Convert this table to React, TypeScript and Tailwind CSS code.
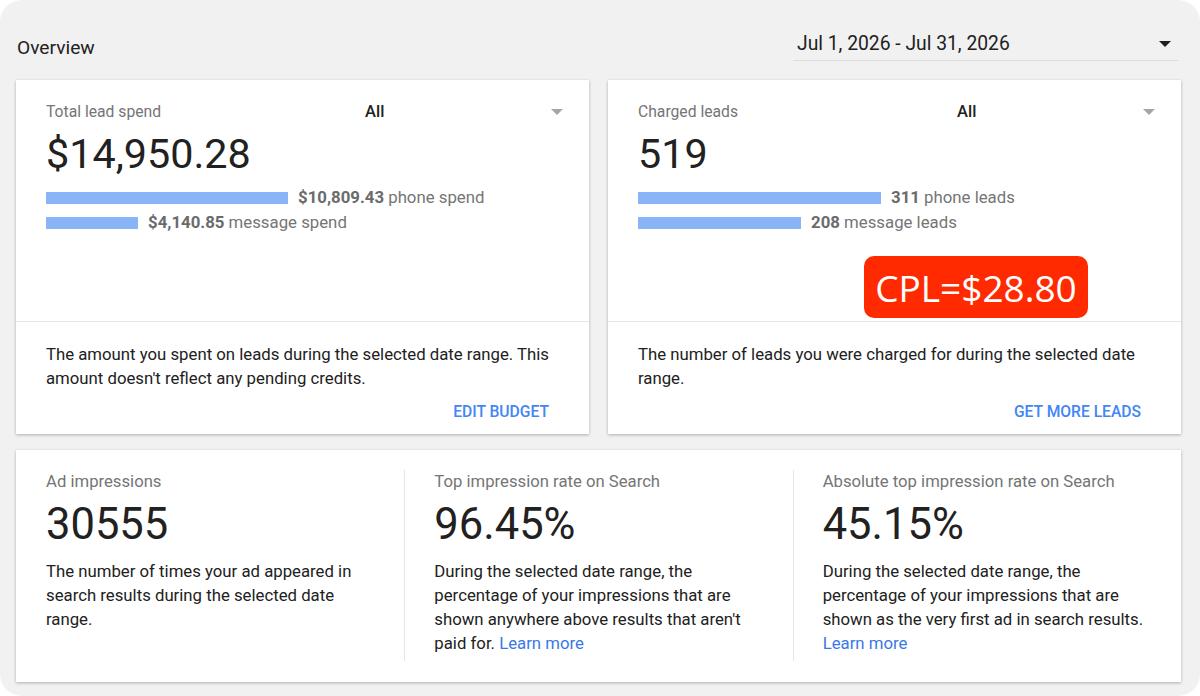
import React from "react";

type Bar = { width: number; value: string; label: string };

type LeadCardProps = {
  title: string;
  total: string;
  bars: Bar[];
  description: string;
  action: string;
  badge?: string;
};

function Caret({ color }: { color: string }) {
  return (
    <svg width="12" height="6" viewBox="0 0 12 6" className="block">
      <path d="M0 0 L12 0 L6 6 Z" fill={color} />
    </svg>
  );
}

function LeadCard({ title, total, bars, description, action, badge }: LeadCardProps) {
  return (
    <div className="bg-white shadow-[0_1px_3px_rgba(0,0,0,0.28)] flex flex-col h-[354px]">
      <div className="relative h-[241px] pl-[30px] pr-[26px] pt-5">
        <div className="flex items-center justify-between h-6">
          <span className="text-[15.7px] text-[#757575]">{title}</span>
          <div className="w-[198px] flex items-center justify-between">
            <span className="text-[16.5px] font-medium text-[#212121]">All</span>
            <Caret color="#a6a6a6" />
          </div>
        </div>
        <div className="mt-[6px] text-[41.3px] leading-[48px] text-[#212121]">{total}</div>
        <div className="mt-2 flex flex-col gap-px">
          {bars.map((b) => (
            <div key={b.label} className="flex items-center h-6 gap-[10px]">
              {/* bar width comes from the data */}
              <div className="h-3 bg-[#8ab4f8]" style={{ width: b.width }} />
              <span className="text-[16.8px] text-[#757575]">
                <span className="font-bold text-[#6b6b6b]">{b.value}</span> {b.label}
              </span>
            </div>
          ))}
        </div>
        {badge && (
          <div className="absolute left-[256px] top-[176px] w-[224px] h-[62px] rounded-[10px] bg-[#ff2a00] flex items-center justify-center">
            <span className="text-white text-[37px] font-['Open_Sans',sans-serif] leading-none">{badge}</span>
          </div>
        )}
      </div>
      <div className="border-t border-[#e6e6e6] flex-1 pl-[30px] pr-10 pt-5">
        <p className="text-[16.75px] leading-6 text-[#212121]">{description}</p>
        <div className="mt-3 flex justify-end">
          <span className="text-[15.65px] leading-5 font-medium text-[#4285f4]">{action}</span>
        </div>
      </div>
    </div>
  );
}

type Stat = { title: string; value: string; text: string; link?: boolean };

const stats: Stat[] = [
  {
    title: "Ad impressions",
    value: "30555",
    text: "The number of times your ad appeared in search results during the selected date range.",
  },
  {
    title: "Top impression rate on Search",
    value: "96.45%",
    text: "During the selected date range, the percentage of your impressions that are shown anywhere above results that aren't paid for.",
    link: true,
  },
  {
    title: "Absolute top impression rate on Search",
    value: "45.15%",
    text: "During the selected date range, the percentage of your impressions that are shown as the very first ad in search results.",
    link: true,
  },
];

export default function App() {
  return (
    <div className="w-[1200px] h-[696px] bg-white font-['Roboto',sans-serif]">
      <div className="h-full rounded-[22px] bg-[#f1f1f1] pl-4 pr-[19px]">
        <div className="h-[80px] flex items-start justify-between">
          <div className="mt-[37px] pl-px text-[19.2px] leading-[22px] text-[#212121]">Overview</div>
          <div className="mt-8 mr-[3px] w-[385px] h-[29px] border-b border-[#dcdcdc] flex items-start justify-between pl-1 pr-[7px]">
            <span className="text-[19.3px] leading-6 text-[#212121]">Jul 1, 2026 - Jul 31, 2026</span>
            <div className="h-6 flex items-center">
              <Caret color="#1f1f1f" />
            </div>
          </div>
        </div>

        <div className="grid grid-cols-2 gap-[19px]">
          <LeadCard
            title="Total lead spend"
            total="$14,950.28"
            bars={[
              { width: 242, value: "$10,809.43", label: "phone spend" },
              { width: 92, value: "$4,140.85", label: "message spend" },
            ]}
            description="The amount you spent on leads during the selected date range. This amount doesn't reflect any pending credits."
            action="EDIT BUDGET"
          />
          <LeadCard
            title="Charged leads"
            total="519"
            bars={[
              { width: 243, value: "311", label: "phone leads" },
              { width: 163, value: "208", label: "message leads" },
            ]}
            description="The number of leads you were charged for during the selected date range."
            action="GET MORE LEADS"
            badge="CPL=$28.80"
          />
        </div>

        <div className="mt-4 bg-white shadow-[0_1px_3px_rgba(0,0,0,0.28)] grid grid-cols-3 pt-5 pb-[21px]">
          {stats.map((s, i) => (
            <div
              key={s.title}
              className={
                i === 0
                  ? "pl-[30px] pr-[30px] h-[191px]"
                  : "pl-[29px] pr-[30px] h-[191px] border-l border-[#e6e6e6]"
              }
            >
              <div className="text-[16.7px] leading-6 text-[#757575]">{s.title}</div>
              <div className="mt-[7px] text-[43.5px] leading-[48px] text-[#212121]">{s.value}</div>
              <p className="mt-[10px] text-[16.75px] leading-6 text-[#212121]">
                {s.text}
                {s.link && (
                  <>
                    {" "}
                    <span className="text-[#3b78e7]">Learn more</span>
                  </>
                )}
              </p>
            </div>
          ))}
        </div>
      </div>
    </div>
  );
}
